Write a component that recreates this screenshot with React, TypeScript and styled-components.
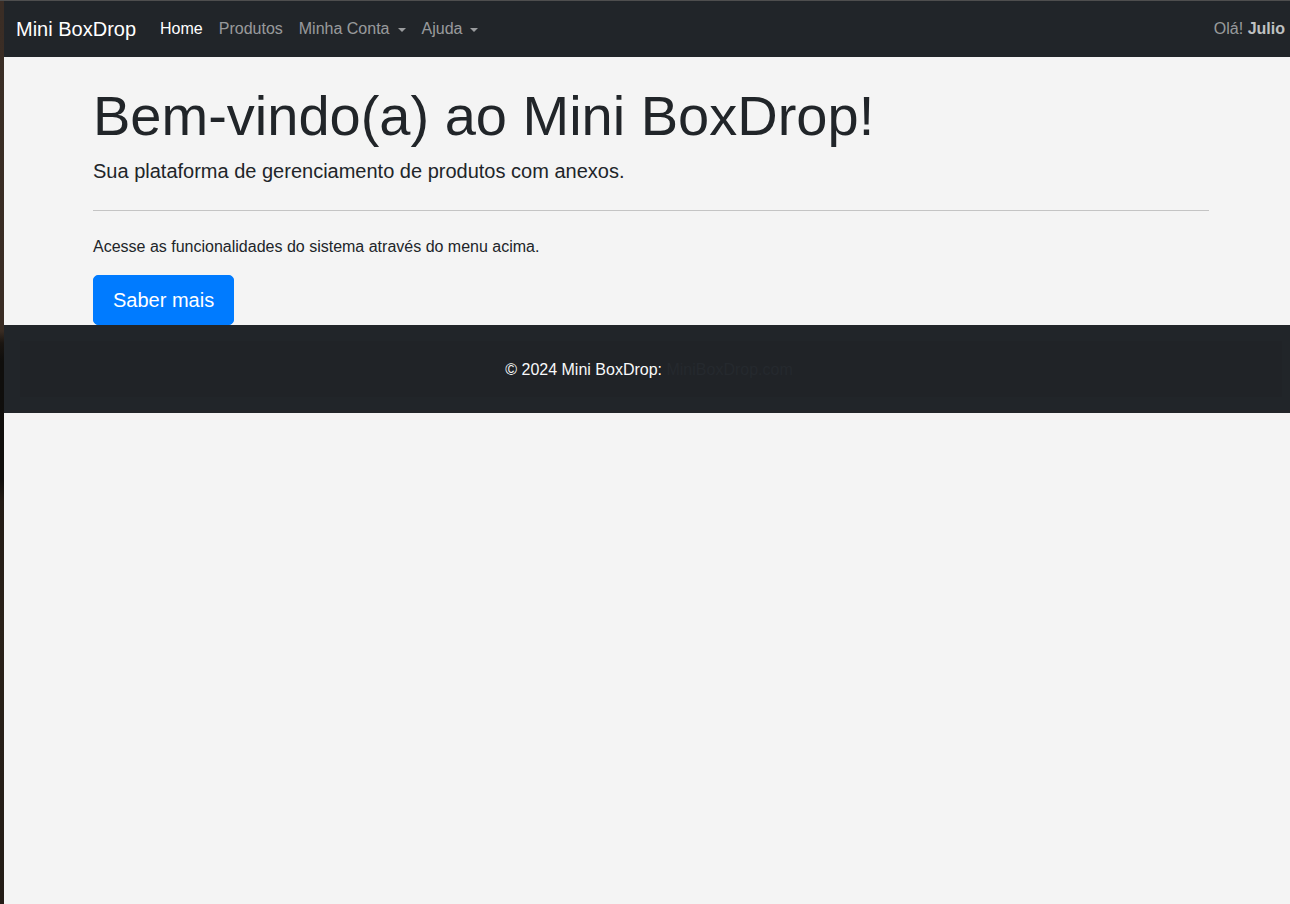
import React from "react";
import styled, { createGlobalStyle } from "styled-components";

const Global = createGlobalStyle`
  html, body {
    margin: 0;
    padding: 0;
    background: #f4f4f4;
    overflow: hidden;
  }
  body {
    font-family: "Liberation Sans", Arial, sans-serif;
    font-size: 16px;
    line-height: 1.5;
    color: #212529;
  }
  * { box-sizing: border-box; }
`;

const Frame = styled.div`
  display: flex;
  min-height: 100vh;
  border-top: 1px solid #4e4e4e;
`;

const DesktopEdge = styled.div`
  flex: 0 0 4px;
  background: linear-gradient(
    to bottom,
    #3a2d25 0px,
    #392c23 330px,
    #1a1511 342px,
    #0f0e0c 360px,
    #100e0c 478px,
    #231b15 500px,
    #2a2119 620px,
    #231c16 100%
  );
`;

const Page = styled.div`
  flex: 0 0 1294px;
  width: 1294px;
  background: #f4f4f4;
`;

const Navbar = styled.nav`
  display: flex;
  align-items: center;
  height: 56px;
  padding: 8px 13px 8px 12px;
  background: #212529;
`;

const Brand = styled.a`
  font-size: 20px;
  line-height: 30px;
  padding: 5px 0;
  margin-right: 16px;
  color: #fff;
  text-decoration: none;
  white-space: nowrap;
`;

const NavList = styled.ul`
  display: flex;
  list-style: none;
  margin: 0;
  padding: 0;
  flex: 1;
`;

const NavLink = styled.a<{ $active?: boolean; $dropdown?: boolean }>`
  display: flex;
  align-items: center;
  padding: 8px;
  line-height: 24px;
  color: ${(p) => (p.$active ? "#fff" : "rgba(255,255,255,0.55)")};
  text-decoration: none;
  white-space: nowrap;
  &::after {
    content: ${(p) => (p.$dropdown ? '""' : "none")};
    display: inline-block;
    margin-left: 8px;
    margin-top: 1px;
    border-top: 4.8px solid currentColor;
    border-left: 4.8px solid transparent;
    border-right: 4.8px solid transparent;
  }
`;

const Greeting = styled.span`
  color: rgba(255, 255, 255, 0.55);
  white-space: nowrap;
  line-height: 24px;
`;

const UserName = styled.strong`
  color: rgba(255, 255, 255, 0.72);
  font-weight: 700;
`;

const Main = styled.main`
  padding-top: 25px;
`;

const Container = styled.div`
  max-width: 1140px;
  margin: 0 auto;
  padding: 0 12px;
`;

const Title = styled.h1`
  margin: 0 0 8px;
  font-size: 56px;
  font-weight: 300;
  line-height: 1.2;
  color: #212529;
`;

const Lead = styled.p`
  margin: 0;
  font-size: 20px;
  line-height: 29px;
`;

const Divider = styled.hr`
  margin: 24px 0;
  border: 0;
  border-top: 1px solid #c4c4c4;
`;

const Text = styled.p`
  margin: 0 0 16px;
`;

const PrimaryButton = styled.a`
  display: inline-block;
  padding: 8px 19px;
  font-size: 20px;
  line-height: 32px;
  color: #fff;
  background: #007bff;
  border: 1px solid #007bff;
  border-radius: 5px;
  text-decoration: none;
  vertical-align: top;
`;

const Footer = styled.footer`
  background: #212529;
  padding: 16px;
`;

const FooterInner = styled.div`
  background: #202327;
  padding: 17px 20px 15px 16px;
  line-height: 24px;
  text-align: center;
  color: #f8f9fa;
`;

const FooterLink = styled.a`
  color: #25292e;
  text-decoration: none;
`;

export default function App() {
  return (
    <>
      <Global />
      <Frame>
        <DesktopEdge />
        <Page>
          <Navbar>
            <Brand href="#">Mini BoxDrop</Brand>
            <NavList>
              <li>
                <NavLink href="#" $active>
                  Home
                </NavLink>
              </li>
              <li>
                <NavLink href="#">Produtos</NavLink>
              </li>
              <li>
                <NavLink href="#" $dropdown>
                  Minha Conta
                </NavLink>
              </li>
              <li>
                <NavLink href="#" $dropdown>
                  Ajuda
                </NavLink>
              </li>
            </NavList>
            <Greeting>
              Olá! <UserName>Julio</UserName>
            </Greeting>
          </Navbar>
          <Main>
            <Container>
              <Title>Bem-vindo(a) ao Mini BoxDrop!</Title>
              <Lead>Sua plataforma de gerenciamento de produtos com anexos.</Lead>
              <Divider />
              <Text>Acesse as funcionalidades do sistema através do menu acima.</Text>
              <PrimaryButton href="#">Saber mais</PrimaryButton>
            </Container>
          </Main>
          <Footer>
            <FooterInner>
              © 2024 Mini BoxDrop: <FooterLink href="#">MiniBoxDrop.com</FooterLink>
            </FooterInner>
          </Footer>
        </Page>
      </Frame>
    </>
  );
}
